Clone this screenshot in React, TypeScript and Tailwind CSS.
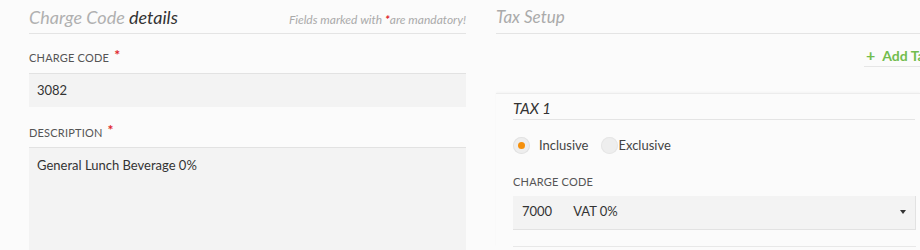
import { useState } from "react";

const font = { fontFamily: "Lato, 'Noto Sans', sans-serif" };

function Label({ text, required }: { text: string; required?: boolean }) {
  return (
    <p className="flex h-[16px] items-start text-[11px] uppercase leading-[16px] tracking-[0.2px] text-[#555]">
      {text}
      {required && <span className="ml-[5px] mt-[-3px] text-[14px] font-bold text-[#e0252b]">*</span>}
    </p>
  );
}

export default function App() {
  const [mode, setMode] = useState<"inc" | "exc">("inc");
  return (
    <div style={font} className="flex h-[250px] w-[920px] overflow-hidden bg-[#fbfbfb]">
      <section className="ml-[29px] w-[437px] shrink-0">
        <div className="flex h-[34px] items-end justify-between border-b border-[#e4e4e4] pb-[4px]">
          <h1 className="text-[18px] italic leading-[24px] text-[#b0b0b0]">
            Charge Code <span className="text-[#333]">details</span>
          </h1>
          <p className="pb-[2px] text-[12px] italic leading-[14px] text-[#aaa]">
            Fields marked with <span className="font-bold text-[#e0252b]">*</span>are mandatory!
          </p>
        </div>
        <div className="mt-[16px]">
          <Label text="Charge Code" required />
        </div>
        <div className="mt-[7px] flex h-[34px] items-center border-t border-[#e2e2e2] bg-[#f3f3f3] px-[8px] text-[13px] text-[#333]">
          3082
        </div>
        <div className="mt-[18px]">
          <Label text="Description" required />
        </div>
        <div className="mt-[6px] h-[110px] border-t border-[#e2e2e2] bg-[#f3f3f3] px-[8px] pt-[8px] text-[13px] text-[#333]">
          General Lunch Beverage 0%
        </div>
      </section>

      <section className="ml-[30px] flex-1">
        <div className="flex h-[34px] items-end border-b border-[#e4e4e4] pb-[4px]">
          <h2 className="text-[17px] italic leading-[24px] text-[#aaa]">Tax Setup</h2>
        </div>
        <div className="mr-[-22px] flex justify-end">
          <button className="mt-[10px] flex h-[23px] items-center gap-[7px] border-b border-[#e6e6e6] pl-[2px] pr-[10px] text-[14px] font-bold text-[#72bd4e]">
            <span className="text-[16px] leading-none">+</span>
            Add Tax
          </button>
        </div>
        <div className="mt-[26px] border-t border-[#ececec] pl-[17px] pr-[4px] shadow-[0_-1px_2px_rgba(0,0,0,0.03)]">
          <div className="flex h-[26px] w-[402px] items-end border-b border-[#e4e4e4] pb-[1px] text-[15px] italic leading-[20px] text-[#333]">
            TAX 1
          </div>
          <div className="mt-[16px] flex items-center text-[13px] text-[#444]">
            <button onClick={() => setMode("inc")} className="flex items-center">
              <span className="flex h-[17px] w-[17px] items-center justify-center rounded-full bg-[#eee] shadow-[inset_0_0_0_1px_#e2e2e2]">
                {mode === "inc" && <span className="h-[7px] w-[7px] rounded-full bg-[#f5900c]" />}
              </span>
              <span className="ml-[9px]">Inclusive</span>
            </button>
            <button onClick={() => setMode("exc")} className="ml-[13px] flex items-center">
              <span className="flex h-[17px] w-[17px] items-center justify-center rounded-full bg-[#eee] shadow-[inset_0_0_0_1px_#e6e6e6]">
                {mode === "exc" && <span className="h-[7px] w-[7px] rounded-full bg-[#f5900c]" />}
              </span>
              <span>Exclusive</span>
            </button>
          </div>
          <div className="mt-[18px]">
            <Label text="Charge Code" />
          </div>
          <div className="mt-[6px] flex h-[34px] w-[403px] items-center border-b border-r border-[#e2e2e2] bg-[#f3f3f3] pl-[9px] pr-[9px] text-[13px] text-[#333]">
            <span>7000</span>
            <span className="ml-[21px]">VAT 0%</span>
            <svg className="ml-auto" width="6" height="4" viewBox="0 0 6 4">
              <path d="M0 0H6L3 4Z" fill="#333" />
            </svg>
          </div>
          <div className="mt-[16px] w-[403px] border-t border-[#e8e8e8]" />
        </div>
      </section>
    </div>
  );
}
